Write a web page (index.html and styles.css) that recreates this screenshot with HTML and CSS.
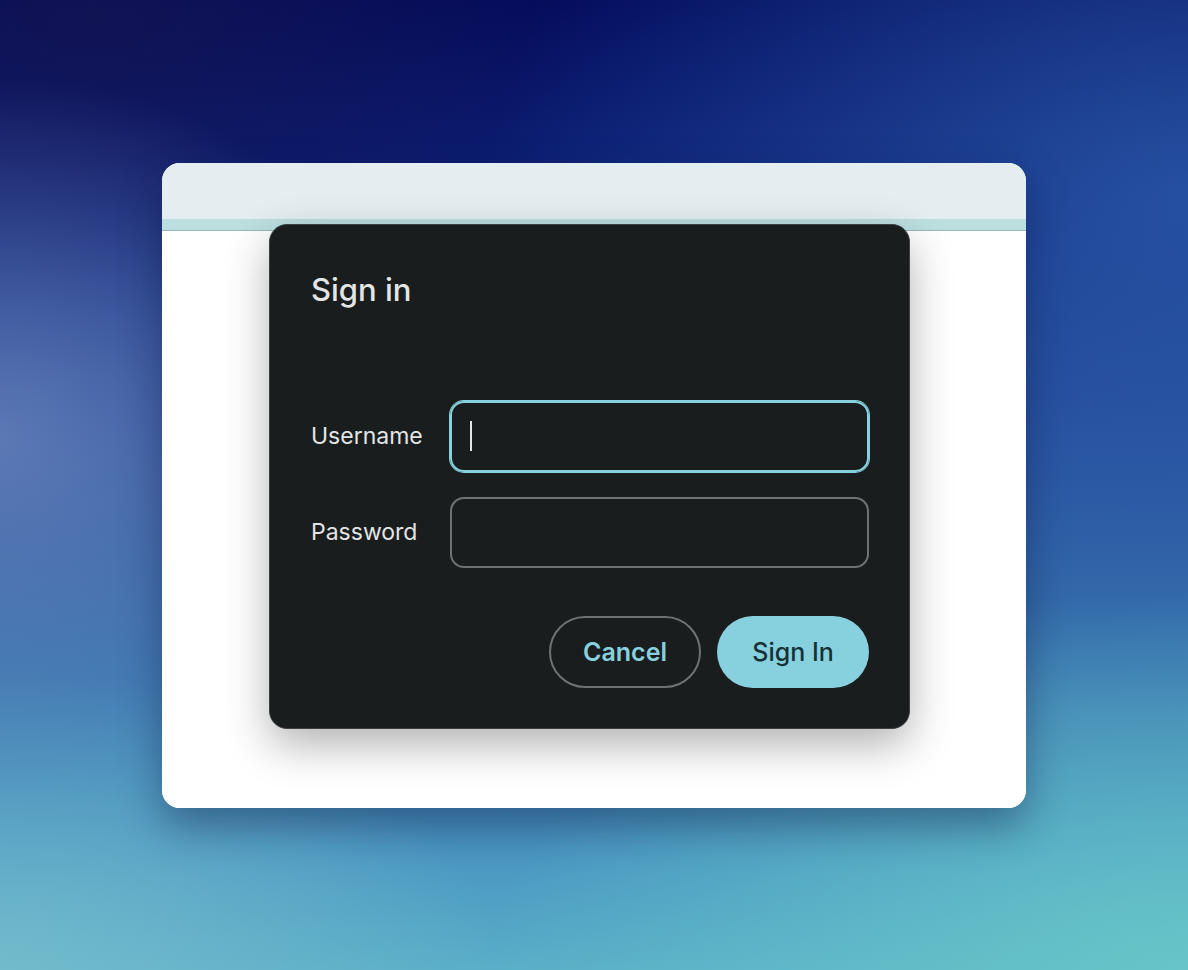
FILE: index.html
```html
<!DOCTYPE html>
<html lang="en">
<head>
    <meta charset="UTF-8">
    <meta name="viewport" content="width=device-width, initial-scale=1.0">
    <title>Sign in</title>
    <link rel="stylesheet" href="styles.css">
</head>
<body>
    <div class="window">
        <div class="titlebar"></div>
        <div class="toolbar"></div>
        <div class="content"></div>

        <div class="dialog">
            <h2>Sign in</h2>

            <div class="form">
                <label>Username</label>
                <div class="field focused"><span class="caret"></span></div>

                <label>Password</label>
                <div class="field"></div>
            </div>

            <div class="actions">
                <button class="btn btn-outline">Cancel</button>
                <button class="btn btn-filled">Sign In</button>
            </div>
        </div>
    </div>
</body>
</html>
```

FILE: styles.css
```css
* {
    margin: 0;
    padding: 0;
    box-sizing: border-box;
    font-family: 'Inter', 'Noto Sans', sans-serif;
}

body {
    height: 970px;
    display: flex;
    align-items: center;
    justify-content: center;
    overflow: hidden;
    background:
        radial-gradient(ellipse 420px 360px at 0% 45%, rgba(110, 135, 190, 0.75), rgba(110, 135, 190, 0) 100%),
        radial-gradient(ellipse 520px 300px at 8% 2%, rgba(22, 22, 80, 0.7), rgba(22, 22, 80, 0) 100%),
        radial-gradient(ellipse 700px 520px at 100% 20%, rgba(48, 100, 180, 0.7), rgba(48, 100, 180, 0) 100%),
        radial-gradient(ellipse 700px 380px at 100% 100%, rgba(104, 200, 200, 0.9), rgba(104, 200, 200, 0) 100%),
        radial-gradient(ellipse 500px 300px at 0% 100%, rgba(120, 190, 205, 0.8), rgba(120, 190, 205, 0) 100%),
        linear-gradient(180deg, #030b5c 0%, #0e237a 22%, #254c98 45%, #3a78b0 70%, #4a96c2 88%, #5aaec8 100%);
}

.window {
    position: relative;
    width: 864px;
    height: 645px;
    border-radius: 18px;
    overflow: hidden;
    display: flex;
    flex-direction: column;
    background: #fff;
    box-shadow: 0 18px 40px rgba(10, 20, 60, 0.4);
}

.titlebar {
    height: 56px;
    background: #e4eef0;
}

.toolbar {
    height: 12px;
    background: #bcdfe2;
    border-bottom: 1px solid #9ab4b8;
}

.content {
    flex: 1;
    background: #fff;
}

/* modal sits on top of the window content */
.dialog {
    position: absolute;
    left: 107px;
    top: 61px;
    width: 641px;
    height: 505px;
    padding: 47px 40px 40px 41px;
    background: #191d1e;
    border: 1px solid #3b4042;
    border-radius: 18px;
    box-shadow: 0 16px 44px rgba(0, 0, 0, 0.3);
    display: flex;
    flex-direction: column;
}

.dialog h2 {
    font-size: 31px;
    font-weight: 500;
    line-height: 36px;
    color: #e3e5e5;
}

.form {
    margin-top: 93px;
    display: grid;
    grid-template-columns: 139px 1fr;
    row-gap: 25px;
    align-items: center;
}

.form label {
    font-size: 23px;
    color: #e3e5e5;
}

.field {
    height: 71px;
    border: 2px solid #6d7273;
    border-radius: 14px;
    padding-left: 18px;
    display: flex;
    align-items: center;
}

.field.focused {
    border-color: #87d1de;
    box-shadow: 0 0 0 1px #87d1de;
}

.caret {
    width: 2px;
    height: 30px;
    background: #e6e6e6;
}

.actions {
    margin-top: auto;
    display: flex;
    justify-content: flex-end;
    gap: 16px;
}

.btn {
    width: 152px;
    height: 72px;
    border-radius: 36px;
    font-size: 25px;
    font-weight: 600;
    cursor: pointer;
}

.btn-outline {
    background: transparent;
    border: 2px solid #6d7273;
    color: #87d1de;
}

.btn-filled {
    background: #87d1de;
    border: none;
    color: #173237;
    font-weight: 500;
}
```
